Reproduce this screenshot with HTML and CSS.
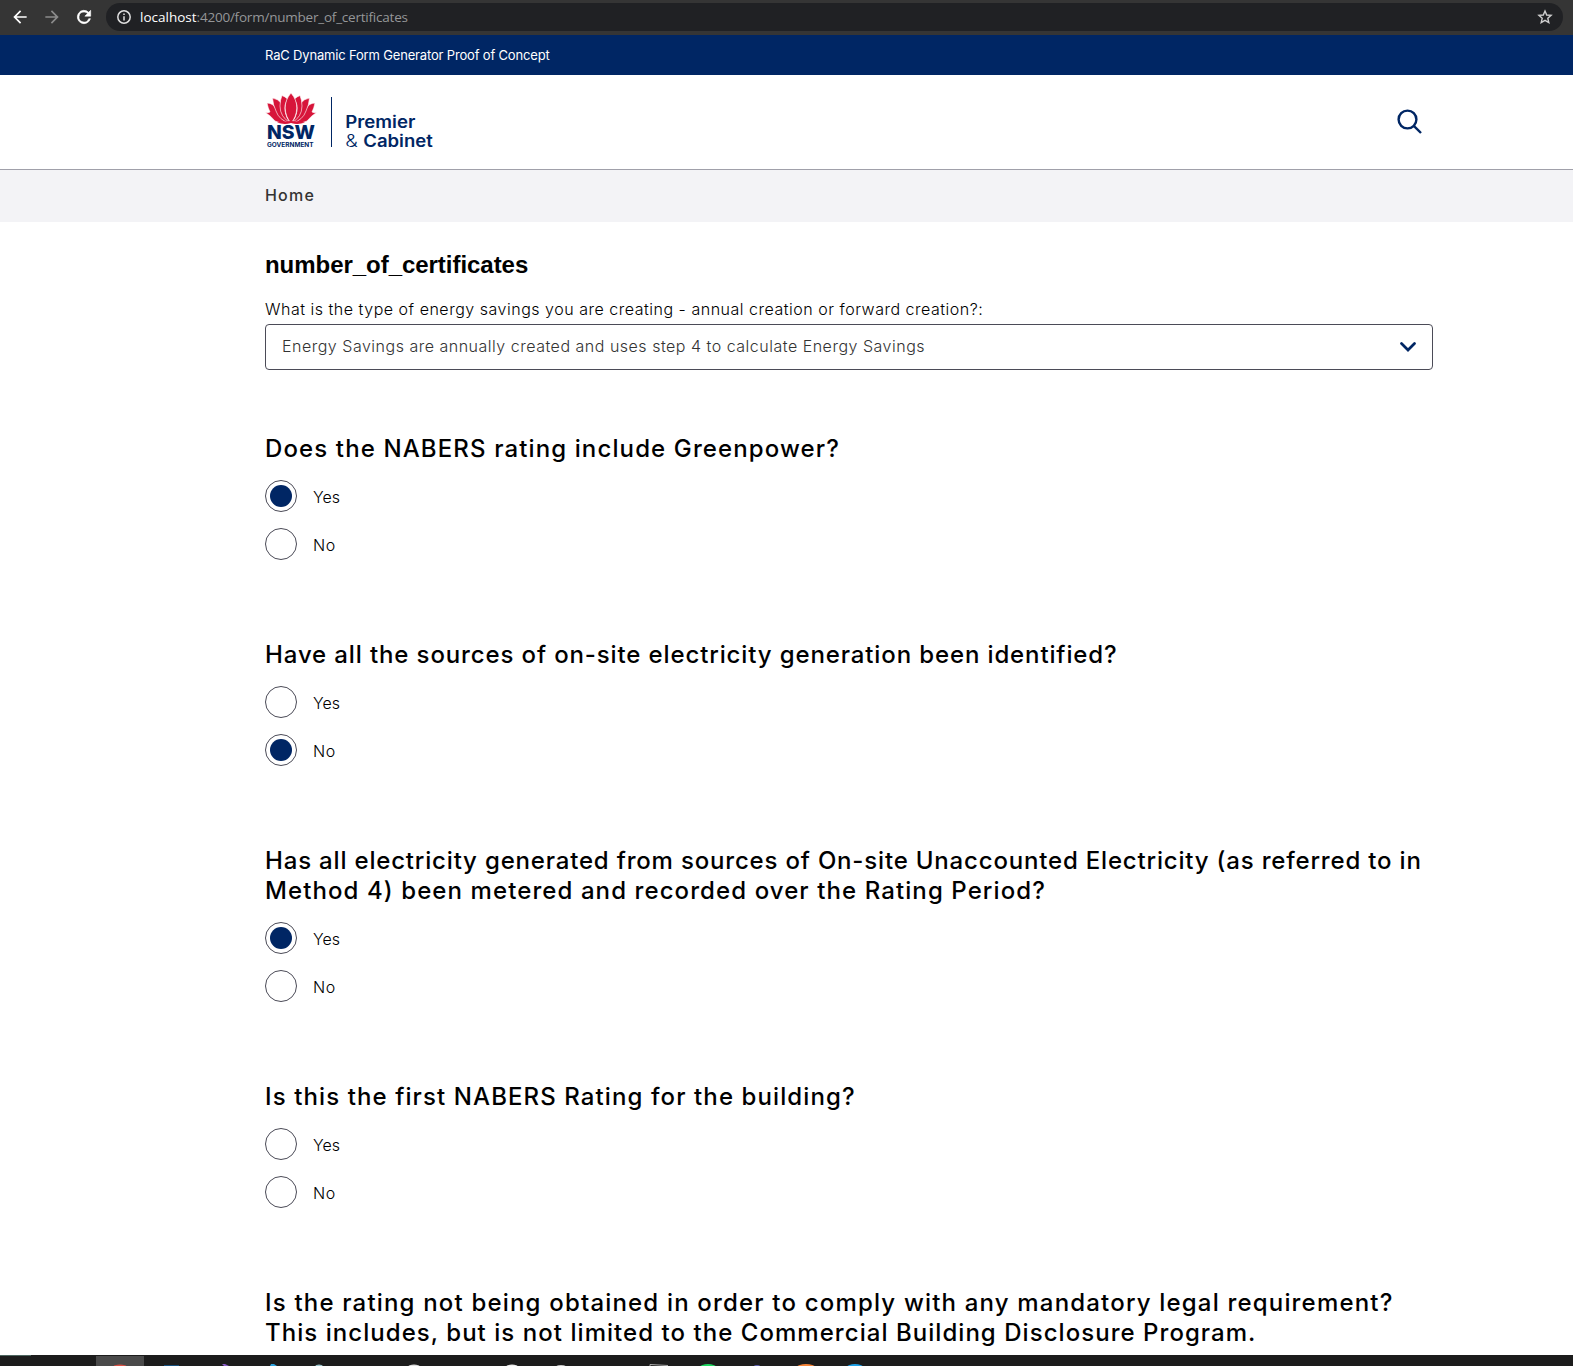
FILE: index.html
```html
<!DOCTYPE html>
<html lang="en">
<head>
<meta charset="utf-8">
<title>number_of_certificates</title>
<link rel="stylesheet" href="styles.css">
</head>
<body>
<div class="browser">
  <svg class="nav-icon" viewBox="0 0 24 24"><path d="M20 11H7.8l5.6-5.6L12 4l-8 8 8 8 1.4-1.4L7.8 13H20z"/></svg>
  <svg class="nav-icon nav-dim" viewBox="0 0 24 24"><path d="M12 4l-1.4 1.4 5.6 5.6H4v2h12.2l-5.6 5.6L12 20l8-8z"/></svg>
  <svg class="nav-icon" viewBox="0 0 24 24"><path d="M17.65 6.35A8 8 0 1 0 19.73 14h-2.08A6 6 0 1 1 12 6c1.66 0 3.14.69 4.22 1.78L13 11h7V4z" stroke="#fff" stroke-width=".7"/></svg>
  <div class="address">
    <svg class="info" viewBox="0 0 16 16"><circle cx="8" cy="8" r="6.2"/><path d="M8 7.2v4.2M8 4.4v1.6"/></svg>
    <div class="url"><span class="host">localhost</span><span class="path">:4200/form/number_of_certificates</span></div>
    <svg class="star" viewBox="0 0 16 16"><path d="M8 2l1.7 4 4.4.4-3.3 2.9 1 4.3L8 11.3l-3.800 2.300 1-4.300L1.900 6.400l4.400-.4z"/></svg>
  </div>
</div>
<div class="masthead"><div class="wrap"><span>RaC Dynamic Form Generator Proof of Concept</span></div></div>
<header class="header">
  <div class="wrap header-row">
    <svg class="logo" viewBox="0 0 180 60" width="180" height="60">
      <g fill="#d7153a" stroke="#fff" stroke-width=".6">
        <path d="M.5 19.500Q3 20 5 19Q3 15 2 10Q8 10 11 16Q14 25 23 30Q15 31 10 28Q6 23 .5 19.500Z"/>
        <path d="M51.500 19.500Q49 20 47 19Q49 15 50 10Q44 10 41 16Q38 25 29 30Q37 31 42 28Q46 23 51.500 19.500Z"/>
        <path d="M7.500 5Q13 6 16 10Q15 20 24.500 30Q14 27 11 18Q8 12 7.500 5Z"/>
        <path d="M44.500 5Q39 6 36 10Q37 20 27.500 30Q38 27 41 18Q44 12 44.500 5Z"/>
        <path d="M17 2.500Q20 3.500 22.500 6Q19 12 20 18Q21 25 25.500 30Q15 24 15 13Q15 7 17 2.500Z"/>
        <path d="M35 2.500Q32 3.500 29.500 6Q33 12 32 18Q31 25 26.500 30Q37 24 37 13Q37 7 35 2.500Z"/>
        <path d="M26 0Q32 7 31.800 15Q31.500 24 26 30Q20.500 24 20.200 15Q20 7 26 0Z"/>
      </g>
      <path d="M12 29.500Q19 32 26 30Q33 32 40 29.500Q33 28 26 28Q19 28 12 29.500Z" fill="#d7153a"/>
      <text class="nsw" x="2" y="46.300" textLength="48" lengthAdjust="spacingAndGlyphs">NSW</text>
      <text class="gov" x="2" y="53.700" textLength="46.500" lengthAdjust="spacingAndGlyphs">GOVERNMENT</text>
      <rect x="66" y="4" width="1" height="50" fill="#002664"/>
      <text class="dept" x="80.300" y="34.700" textLength="70" lengthAdjust="spacingAndGlyphs">Premier</text>
      <text class="amp" x="80.300" y="53.700" textLength="12.500" lengthAdjust="spacingAndGlyphs">&amp;</text>
      <text class="dept" x="98.300" y="53.700" textLength="69.500" lengthAdjust="spacingAndGlyphs">Cabinet</text>
    </svg>
    <svg class="search" viewBox="0 0 26 26"><circle cx="10.500" cy="10.500" r="8.900"/><path d="M16.800 16.800L24 24"/></svg>
  </div>
</header>
<nav class="crumbs"><div class="wrap"><span>Home</span></div></nav>
<main class="wrap form">
  <h1 class="title">number_of_certificates</h1>
  <label class="label">What is the type of energy savings you are creating - annual creation or forward creation?:</label>
  <div class="select"><span class="value">Energy Savings are annually created and uses step 4 to calculate Energy Savings</span>
    <svg class="chevron" viewBox="0 0 16 10"><path d="M1.500 1.500L8 8l6.500-6.500"/></svg></div>
  <section class="question"><h2><span class="greenpower">Does the NABERS rating include Greenpower?</span></h2>
    <div class="option"><i class="radio on"></i><span>Yes</span></div>
    <div class="option"><i class="radio"></i><span class="no">No</span></div></section>
  <section class="question"><h2><span class="sources">Have all the sources of on-site electricity generation been identified?</span></h2>
    <div class="option"><i class="radio"></i><span>Yes</span></div>
    <div class="option"><i class="radio on"></i><span class="no">No</span></div></section>
  <section class="question"><h2><span class="metered">Has all electricity generated from sources of On-site Unaccounted Electricity (as referred to in</span><br><span class="recorded">Method 4) been metered and recorded over the Rating Period?</span></h2>
    <div class="option"><i class="radio on"></i><span>Yes</span></div>
    <div class="option"><i class="radio"></i><span class="no">No</span></div></section>
  <section class="question"><h2><span class="first-rating">Is this the first NABERS Rating for the building?</span></h2>
    <div class="option"><i class="radio"></i><span>Yes</span></div>
    <div class="option"><i class="radio"></i><span class="no">No</span></div></section>
  <section class="question"><h2><span class="mandatory">Is the rating not being obtained in order to comply with any mandatory legal requirement?</span><br><span class="disclosure">This includes, but is not limited to the Commercial Building Disclosure Program.</span></h2></section>
</main>
<footer class="taskbar">
  <svg width="1573" height="11" viewBox="0 0 1573 11">
    <rect width="31" height="1" fill="#4d655f"/>
    <rect x="96" y="1" width="48" height="10" fill="#4a4a4a"/>
    <ellipse cx="120" cy="12" rx="7" ry="2.500" fill="#d94f43"/>
    <rect x="164" y="10" width="15" height="1" fill="#16507e"/>
    <path d="M222 9h3l4 2h-5z" fill="#8a5cc8"/>
    <path d="M270 11l1-2h3l3 2z" fill="#2ba1dd"/>
    <ellipse cx="319" cy="11" rx="3.500" ry="1.500" fill="#9cc5cb"/>
    <ellipse cx="414" cy="12" rx="6" ry="2.500" fill="#ddd"/>
    <ellipse cx="512" cy="12" rx="6" ry="2.500" fill="#eee"/>
    <ellipse cx="561" cy="12" rx="5" ry="2" fill="#ccc"/>
    <path d="M650 11V9.500l18 1" stroke="#aaa" fill="none"/>
    <ellipse cx="708" cy="12" rx="8" ry="3" fill="#1ed760"/>
    <ellipse cx="757" cy="11" rx="3" ry="1" fill="#6264b7"/>
    <ellipse cx="806" cy="12" rx="9" ry="3" fill="#f78437"/>
    <ellipse cx="855" cy="12" rx="8" ry="3" fill="#1da1e8"/>
  </svg>
</footer>
</body>
</html>
```
FILE: styles.css
```css
* { box-sizing: border-box; }
body { margin: 0; height: 1366px; overflow: hidden; display: flex; flex-direction: column; background: #fff; color: #000; font-family: Inter, "Open Sans", sans-serif; }
.wrap { width: 1168px; margin-left: 265px; }
.browser { height: 35px; flex: none; background: #353535; display: flex; align-items: center; padding: 0 10px; gap: 12px; }
.nav-icon { width: 20px; height: 20px; fill: #fff; flex: none; margin-top: -1px; }
.nav-dim { fill: #8b8b8b; }
.address { flex: 1; height: 28px; margin-top: -1px; border-radius: 14px; background: #202124; display: flex; align-items: center; padding: 0 10px; }
.info { width: 16px; height: 16px; fill: none; stroke: #e0e0e0; stroke-width: 1.5; }
.url { flex: 1; margin-left: 8px; font: 13.5px/20px "Open Sans", sans-serif; color: #959698; white-space: nowrap; }
.host { color: #fff; }
.path { letter-spacing: -.22px; }
.star { width: 16px; height: 16px; fill: none; stroke: #cfcfcf; stroke-width: 1.4; }
.masthead { height: 40px; flex: none; background: #002664; color: #fff; font-size: 13px; line-height: 40px; letter-spacing: -.17px; }
.header { height: 95px; flex: none; border-bottom: 1px solid #a0a0aa; }
.header-row { display: flex; justify-content: space-between; align-items: flex-start; padding-top: 18px; }
.logo text { font-weight: 600; fill: #002664; }
.logo .nsw { font-size: 19px; font-weight: 800; }
.logo .gov { font-size: 6px; font-weight: 700; }
.logo .dept { font-size: 17px; }
.logo .amp { font-size: 17px; font-weight: 300; }
.search { width: 26px; height: 26px; margin: 16px 10.5px 0 0; fill: none; stroke: #002664; stroke-width: 2.4; }
.crumbs { height: 52px; flex: none; background: #f3f3f6; font-size: 16px; font-weight: 500; line-height: 50px; color: #333; letter-spacing: 1.2px; }
.form { flex: 1; min-height: 0; padding-top: 28px; white-space: nowrap; }
.title { margin: 0; height: 44px; font: 700 24px/30px "Liberation Sans", sans-serif; letter-spacing: -.04px; }
.label { display: block; height: 30px; font-size: 16px; line-height: 30px; font-weight: 300; letter-spacing: .516px; }
.select { height: 46px; border: 1px solid #4b4b57; border-radius: 4px; display: flex; justify-content: space-between; align-items: center; padding: 0 16px; font-size: 16px; font-weight: 300; color: #333; margin-bottom: 64px; }
.value { letter-spacing: .506px; padding-bottom: 2px; }
.chevron { width: 16px; height: 10px; fill: none; stroke: #002664; stroke-width: 2.7; stroke-linecap: round; }
.question { margin-bottom: 80px; }
h2 { margin: 0 0 16px; font-size: 24px; line-height: 30px; font-weight: 500; }
.greenpower { letter-spacing: 1.12px; }
.sources { letter-spacing: .875px; }
.metered { letter-spacing: .818px; }
.recorded { letter-spacing: 1.09px; }
.first-rating { letter-spacing: 1.1px; }
.mandatory { letter-spacing: 1.18px; }
.disclosure { letter-spacing: 1.045px; }
.option { display: flex; align-items: center; gap: 16px; height: 32px; margin-bottom: 16px; font-size: 16px; font-weight: 300; }
.option span { padding-top: 2px; }
.no { letter-spacing: .7px; }
.radio { width: 32px; height: 32px; border: 1px solid #4b4b57; border-radius: 50%; padding: 4px; }
.on { background: #002664 content-box; }
.taskbar { height: 11px; flex: none; background: #1c1c1c; }
.taskbar svg { display: block; }
```
